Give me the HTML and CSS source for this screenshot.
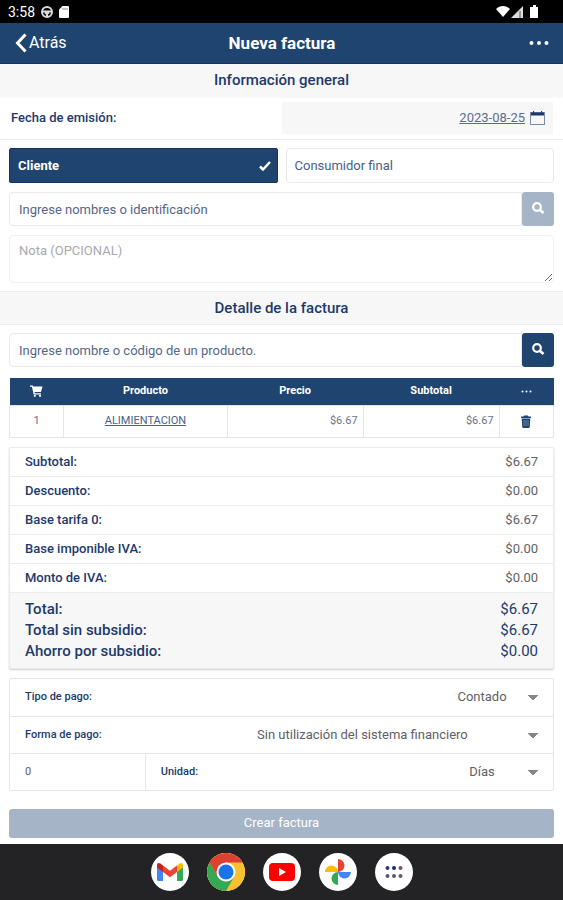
FILE: index.html
```html
<!DOCTYPE html>
<html lang="es">
<head>
    <meta charset="UTF-8">
    <meta name="viewport" content="width=device-width, initial-scale=1.0">
    <title>Nueva factura</title>
    <link rel="stylesheet" href="styles.css">
</head>
<body>
    <div class="status-bar">
        <span>3:58</span>
        <svg width="12" height="12" viewBox="0 0 12 12" fill="none" stroke="#dcdcdc" stroke-width="2">
            <circle cx="6" cy="6" r="5"/>
            <path d="M1 5.5h10M4 6.5l2 1.5 2-1.5M6 8v3"/>
        </svg>
        <svg width="10" height="12" viewBox="0 0 10 12" fill="#fff">
            <path d="M3.5 0H9a1 1 0 0 1 1 1v10a1 1 0 0 1-1 1H1a1 1 0 0 1-1-1V3.5z"/>
            <path d="M4 2v2M6 2v2M8 2v2" stroke="#888" stroke-width="1"/>
        </svg>
        <svg class="signals" width="42" height="14" viewBox="0 0 42 14" fill="#fff">
            <path d="M0 4C4 0 10 0 14 4L7 12z"/>
            <path d="M15 13L27 1v12z" fill="#ddd"/>
            <path d="M24 6v7" stroke="#555" stroke-width="1"/>
            <path d="M35 2h2V0h3v2h2v11h-8V2z"/>
        </svg>
    </div>

    <header class="top-bar">
        <button type="button" class="back">
            <svg width="12" height="20" viewBox="0 0 12 20" fill="none" stroke="#fff" stroke-width="3">
                <path d="M10.5 1.5L2.5 10l8 8.5"/>
            </svg>
            Atrás
        </button>
        <h1>Nueva factura</h1>
        <button type="button" class="more" aria-label="Más opciones">
            <svg width="20" height="6" viewBox="0 0 20 6" fill="#fff">
                <circle cx="2.5" cy="3" r="2"/><circle cx="10" cy="3" r="2"/><circle cx="17.5" cy="3" r="2"/>
            </svg>
        </button>
    </header>

    <main>
        <h2>Información general</h2>
        <div class="date-row">
            <label for="fecha">Fecha de emisión:</label>
            <div class="date-field">
                <input type="text" id="fecha" value="2023-08-25">
                <svg width="15" height="14" viewBox="0 0 15 14" fill="none" stroke="#7b8ba5">
                    <rect x="0.5" y="1.5" width="14" height="12"/>
                    <path d="M1 3h13" stroke="#1d3a6c" stroke-width="3"/>
                    <path d="M3.5 0v2M11.5 0v2" stroke="#1d3a6c"/>
                </svg>
            </div>
        </div>

        <div class="block">
            <div class="choices">
                <label class="choice">
                    <input type="radio" name="tipo" checked>
                    <span>Cliente</span>
                    <svg width="12" height="10" viewBox="0 0 12 10" fill="none" stroke="#fff" stroke-width="2.5">
                        <path d="M1 5.5L4 8.5 11 1"/>
                    </svg>
                </label>
                <label class="choice">
                    <input type="radio" name="tipo">
                    <span>Consumidor final</span>
                    <svg width="12" height="10" viewBox="0 0 12 10" fill="none" stroke="#fff" stroke-width="2.5">
                        <path d="M1 5.5L4 8.5 11 1"/>
                    </svg>
                </label>
            </div>
            <div class="search">
                <input type="text" placeholder="Ingrese nombres o identificación" aria-label="Cliente">
                <button type="button" aria-label="Buscar cliente" disabled>
                    <svg width="13" height="12" viewBox="0 0 13 12" fill="none" stroke="#fff">
                        <circle cx="5" cy="5" r="3.8" stroke-width="2.2"/>
                        <path d="M7.5 7.5l4 3.5" stroke-width="2.6"/>
                    </svg>
                </button>
            </div>
            <textarea placeholder="Nota (OPCIONAL)" aria-label="Nota"></textarea>
        </div>

        <h2 class="lined">Detalle de la factura</h2>
        <div class="block">
            <div class="search">
                <input type="text" placeholder="Ingrese nombre o código de un producto." aria-label="Producto">
                <button type="button" aria-label="Buscar producto">
                    <svg width="13" height="12" viewBox="0 0 13 12" fill="none" stroke="#fff">
                        <circle cx="5" cy="5" r="3.8" stroke-width="2.2"/>
                        <path d="M7.5 7.5l4 3.5" stroke-width="2.6"/>
                    </svg>
                </button>
            </div>

            <table class="items">
                <thead>
                    <tr>
                        <th class="narrow">
                            <svg width="13" height="12" viewBox="0 0 13 12" fill="#fff" role="img" aria-label="Cantidad">
                                <path d="M0 0.5h2.8l0.4 1H12.5L11 7H4.5l0.3 1.2H11v1.2H3.7L1.9 1.7H0z"/>
                                <circle cx="4.8" cy="10.8" r="1.1"/><circle cx="10" cy="10.8" r="1.1"/>
                            </svg>
                        </th>
                        <th class="wide">Producto</th>
                        <th>Precio</th>
                        <th>Subtotal</th>
                        <th class="narrow">
                            <svg width="11" height="3" viewBox="0 0 11 3" fill="#fff" role="img" aria-label="Acciones">
                                <circle cx="1.5" cy="1.5" r="1"/><circle cx="5.5" cy="1.5" r="1"/><circle cx="9.5" cy="1.5" r="1"/>
                            </svg>
                        </th>
                    </tr>
                </thead>
                <tbody>
                    <tr>
                        <td>1</td>
                        <td><a href="#">ALIMIENTACION</a></td>
                        <td class="money">$6.67</td>
                        <td class="money">$6.67</td>
                        <td>
                            <button type="button" class="delete" aria-label="Eliminar">
                                <svg width="10" height="13" viewBox="0 0 10 13" fill="#1f4470">
                                    <path d="M3 0.5h4l0.5 1H10V3H0V1.5h2.5zM0.7 3.5h8.6l-0.5 8.3q-0.1 1.2-1.2 1.2H2.4q-1.1 0-1.2-1.2z"/>
                                    <path d="M3 5v6M5 5v6M7 5v6" stroke="#8fa2ba" stroke-width="0.7"/>
                                </svg>
                            </button>
                        </td>
                    </tr>
                </tbody>
            </table>

            <dl class="summary">
                <div class="line"><dt>Subtotal:</dt><dd>$6.67</dd></div>
                <div class="line"><dt>Descuento:</dt><dd>$0.00</dd></div>
                <div class="line"><dt>Base tarifa 0:</dt><dd>$6.67</dd></div>
                <div class="line"><dt>Base imponible IVA:</dt><dd>$0.00</dd></div>
                <div class="line"><dt>Monto de IVA:</dt><dd>$0.00</dd></div>
                <div class="total"><dt>Total:</dt><dd>$6.67</dd></div>
                <div class="total"><dt>Total sin subsidio:</dt><dd>$6.67</dd></div>
                <div class="total"><dt>Ahorro por subsidio:</dt><dd>$0.00</dd></div>
            </dl>

            <div class="payment">
                <div class="pay-row">
                    <label for="tipo-pago">Tipo de pago:</label>
                    <select id="tipo-pago"><option>Contado</option></select>
                </div>
                <div class="pay-row">
                    <label for="forma-pago">Forma de pago:</label>
                    <select id="forma-pago" class="long"><option>Sin utilización del sistema financiero</option></select>
                </div>
                <div class="pay-row term">
                    <input type="text" value="0" aria-label="Plazo">
                    <div class="unit">
                        <label for="unidad">Unidad:</label>
                        <select id="unidad"><option>Días</option></select>
                    </div>
                </div>
            </div>

            <button type="button" class="submit" disabled>Crear factura</button>
        </div>
    </main>

    <nav class="dock">
        <a href="#" aria-label="Gmail">
            <svg width="26" height="20" viewBox="0 0 26 20">
                <path d="M0 3v14.5Q0 19 1.5 19H6V8z" fill="#4285f4"/>
                <path d="M26 3v14.5Q26 19 24.5 19H20V8z" fill="#34a853"/>
                <path d="M20 3.5V10l6-4.5V3q0-3-3.5-1.5z" fill="#fbbc04"/>
                <path d="M6 3.5V10L0 5.5V3q0-3 3.5-1.5z" fill="#c5221f"/>
                <path d="M6 3.5L13 8.8 20 3.5V10l-7 5.3L6 10z" fill="#ea4335"/>
            </svg>
        </a>
        <a href="#" aria-label="Chrome">
            <svg width="38" height="38" viewBox="0 0 38 38">
                <circle cx="19" cy="19" r="19" fill="#fbc02d"/>
                <path d="M19 19L10.8 23.75 2.55 9.5A19 19 0 0 0 19 38l8.2-14.25z" fill="#34a853"/>
                <path d="M19 19V9.5H35.45A19 19 0 0 0 2.55 9.5l8.25 14.25z" fill="#e04030"/>
                <circle cx="19" cy="19" r="9.5" fill="#fff"/>
                <circle cx="19" cy="19" r="7.5" fill="#1a73e8"/>
            </svg>
        </a>
        <a href="#" aria-label="YouTube">
            <svg width="26" height="18" viewBox="0 0 26 18">
                <rect width="26" height="18" rx="4" fill="#f00"/>
                <path d="M10 5l7 4-7 4z" fill="#fff"/>
            </svg>
        </a>
        <a href="#" aria-label="Fotos">
            <svg width="26" height="26" viewBox="0 0 26 26">
                <path d="M13 0a6.500 6.500 0 0 1 0 13z" fill="#ea4335"/>
                <path d="M26 13a6.500 6.500 0 0 1-13 0z" fill="#4285f4"/>
                <path d="M13 26a6.500 6.500 0 0 1 0-13z" fill="#34a853"/>
                <path d="M0 13a6.500 6.500 0 0 1 13 0z" fill="#fbbc04"/>
            </svg>
        </a>
        <a href="#" aria-label="Aplicaciones">
            <svg width="18" height="12" viewBox="0 0 18 12" fill="#5d5a70">
                <circle cx="2.5" cy="2" r="2" fill="#2c3c80"/><circle cx="9" cy="2" r="2" fill="#172a80"/><circle cx="15.5" cy="2" r="2" fill="#7c5068"/>
                <circle cx="2.5" cy="10" r="2"/><circle cx="9" cy="10" r="2"/><circle cx="15.5" cy="10" r="2"/>
            </svg>
        </a>
    </nav>
</body>
</html>
```
FILE: styles.css
```css
* {
    box-sizing: border-box;
}

body {
    margin: 0;
    min-height: 100vh;
    display: flex;
    flex-direction: column;
    background: #fff;
    color: #1d3a6c;
    font-family: Roboto, "Liberation Sans", sans-serif;
    font-size: 13px;
    line-height: 16px;
}

button,
input,
select,
textarea {
    font: inherit;
    color: inherit;
    border: 0;
    margin: 0;
    padding: 0;
    background: none;
}

svg {
    display: block;
    flex: none;
}

/* Android status bar */
.status-bar {
    display: flex;
    align-items: center;
    gap: 6px;
    height: 23px;
    padding: 0 25px 0 8px;
    background: #000;
    color: #fff;
    font-size: 14px;
}

.signals {
    margin-left: auto;
}

.top-bar {
    display: grid;
    grid-template-columns: 1fr auto 1fr;
    align-items: center;
    height: 41px;
    padding: 0 14px 0 15px;
    background: #1f4470;
    border-bottom: 1px solid #17345f;
    color: #fff;
}

.top-bar h1 {
    margin: 0;
    font-size: 17px;
    line-height: 20px;
    font-weight: 700;
}

.back {
    display: flex;
    align-items: center;
    gap: 2px;
    font-size: 16px;
}

.more {
    justify-self: end;
}

main {
    flex: 1;
}

h2 {
    margin: 0;
    padding: 6px 0 8px;
    background: #f7f7f8;
    font-size: 15px;
    line-height: 20px;
    font-weight: 500;
    text-align: center;
}

h2.lined {
    border-top: 1px solid #ececee;
    border-bottom: 1px solid #ececee;
    padding: 6px 0;
}

.date-row {
    display: grid;
    grid-template-columns: 1fr 1fr;
    align-items: center;
    padding: 4px 10px 5px 11px;
    border-bottom: 1px solid #ececee;
    font-weight: 500;
}

.date-field {
    display: flex;
    align-items: center;
    justify-content: flex-end;
    gap: 5px;
    height: 32px;
    padding: 0 8px;
    background: #f7f7f8;
}

.date-field input {
    width: 100%;
    text-align: right;
    text-decoration: underline;
    font-weight: 400;
    color: #5c6c8c;
}

.block {
    display: flex;
    flex-direction: column;
    gap: 9px;
    padding: 8px 9px;
}

.choices {
    display: grid;
    grid-template-columns: 1fr 1fr;
    gap: 8px;
}

.choice {
    display: flex;
    align-items: center;
    justify-content: space-between;
    height: 35px;
    padding: 0 6px 0 8px;
    border: 1px solid #e9e9ec;
    border-radius: 4px;
    color: #4a5f85;
}

.choice input {
    appearance: none;
    position: absolute;
}

.choice svg {
    visibility: hidden;
}

.choice:has(input:checked) {
    background: #1f4470;
    border-color: #17345f;
    border-radius: 2px;
    color: #fff;
    font-weight: 700;
}

.choice:has(input:checked) svg {
    visibility: visible;
}

.search {
    display: flex;
}

.search input {
    flex: 1;
    min-width: 0;
    height: 34px;
    padding: 0 9px;
    border: 1px solid #e9e9ec;
    border-radius: 4px 0 0 4px;
}

.search input::placeholder {
    color: #546788;
    opacity: 1;
}

.search button {
    display: flex;
    justify-content: center;
    align-items: center;
    width: 32px;
    padding-bottom: 3px;
    border-radius: 3px;
    background: #1f4470;
}

.search button:disabled,
.submit:disabled {
    background: #a5b4c6;
}

textarea {
    height: 48px;
    padding: 7px 9px;
    border: 1px solid #f0f0f2;
    border-radius: 4px;
    resize: vertical;
}

textarea::placeholder {
    color: #a9a9ab;
}

.items {
    width: 100%;
    margin-top: 2px;
    border-collapse: collapse;
    table-layout: fixed;
    font-size: 11px;
    text-align: center;
}

.items th {
    width: 25%;
    height: 27px;
    padding: 0;
    background: #1f4470;
    color: #fff;
}

.items .narrow {
    width: 10%;
}

.items .wide {
    width: 30%;
}

.items td {
    height: 32px;
    padding: 0 5px;
    border: 1px solid #e4e4e8;
    color: #6b7384;
}

.items td.money {
    text-align: right;
}

.items svg {
    margin: 0 auto;
}

.items .delete {
    vertical-align: middle;
}

.items a {
    color: #4a5f85;
}

.summary {
    margin: 0;
    padding-bottom: 6px;
    border: 1px solid #ececee;
    border-radius: 2px;
    background: #f7f7f8;
    box-shadow: 0 1px 2px rgba(0, 0, 0, 0.2);
}

.summary div {
    display: flex;
    justify-content: space-between;
    padding: 0 15px;
}

.summary dt {
    font-weight: 500;
}

.summary dd {
    margin: 0;
}

.summary .line {
    padding-top: 6px;
    padding-bottom: 6px;
    border-bottom: 1px solid #ececee;
    background: #fff;
}

.line dd {
    color: #606266;
}

.summary .total {
    font-size: 15px;
    line-height: 21px;
}

.line + .total {
    margin-top: 6px;
}

.payment {
    border: 1px solid #e6e6e9;
    border-radius: 2px;
}

.pay-row {
    display: flex;
    align-items: center;
    justify-content: space-between;
    height: 37px;
    padding: 0 15px;
}

.pay-row + .pay-row {
    border-top: 1px solid #e6e6e9;
}

.pay-row label {
    font-size: 11px;
    font-weight: 500;
}

.pay-row select {
    appearance: none;
    min-width: 84px;
    padding-right: 28px;
    background: linear-gradient(to bottom right, #85858a 50%, transparent 51%) right 0 top 6px / 5px 5px no-repeat,
        linear-gradient(to bottom left, #85858a 50%, transparent 51%) right 5px top 6px / 5px 5px no-repeat;
    color: #5f6065;
    text-align-last: center;
}

.pay-row select.long {
    width: 63%;
}

.pay-row.term {
    display: grid;
    grid-template-columns: 1fr 3fr;
    padding: 0;
}

.term input {
    height: 100%;
    width: 100%;
    padding-left: 15px;
    border-right: 1px solid #e6e6e9;
    color: #5f6065;
    font-size: 11px;
}

.unit {
    display: flex;
    align-items: center;
    justify-content: space-between;
    padding: 0 15px;
}

.submit {
    height: 29px;
    margin-top: 9px;
    border-radius: 3px;
    background: #1f4470;
    color: #fff;
}

main .block:last-child {
    padding-bottom: 6px;
}

/* Launcher dock */
.dock {
    display: flex;
    justify-content: center;
    align-items: center;
    gap: 18px;
    height: 56px;
    background: #232325;
}

.dock a {
    display: flex;
    justify-content: center;
    align-items: center;
    width: 38px;
    height: 38px;
    border-radius: 50%;
    background: #fff;
}
```
